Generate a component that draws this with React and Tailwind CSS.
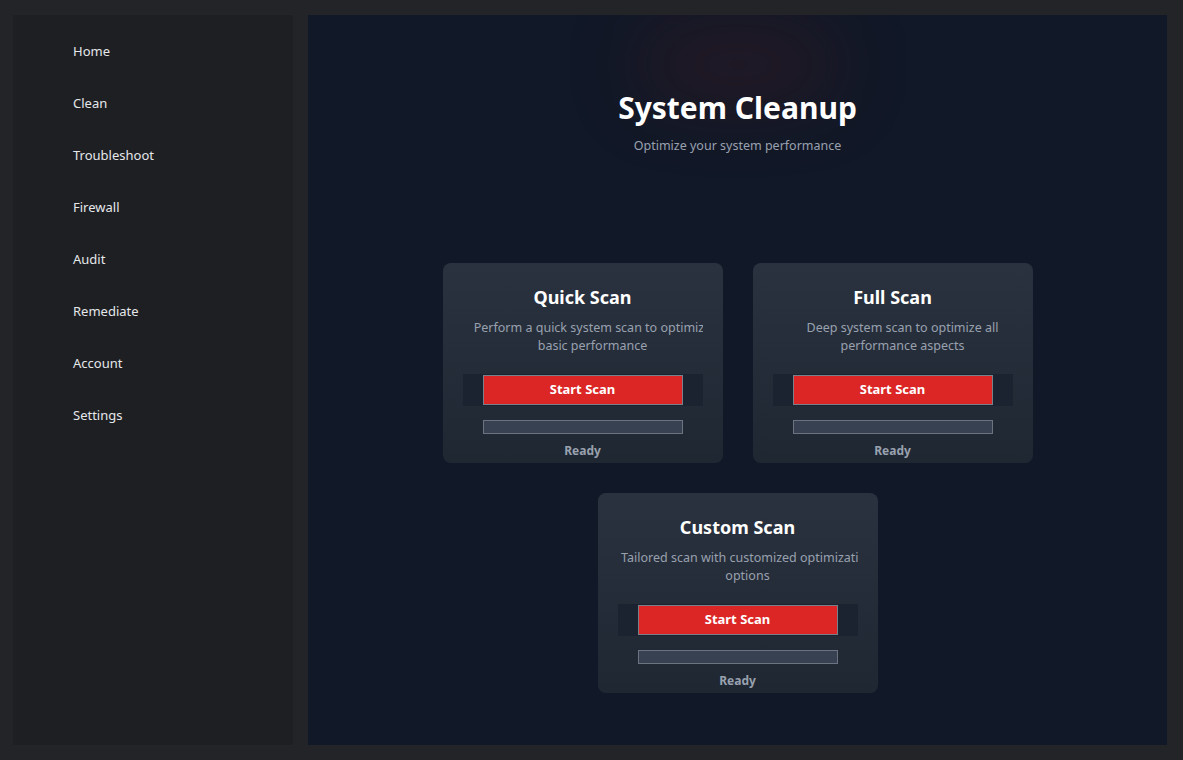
import React from 'react';

const navItems = ['Home', 'Clean', 'Troubleshoot', 'Firewall', 'Audit', 'Remediate', 'Account', 'Settings'];

const scans = [
  { title: 'Quick Scan', lines: ['Perform a quick system scan to optimize', 'basic performance'] },
  { title: 'Full Scan', lines: ['Deep system scan to optimize all', 'performance aspects'] },
  { title: 'Custom Scan', lines: ['Tailored scan with customized optimization', 'options'] },
];

const ScanCard = ({ scan }) => (
  <div className="w-[280px] h-[200px] rounded-lg bg-gradient-to-b from-[#2a323f] to-[#1f2733] flex flex-col items-center pt-[21px]">
    <h2 className="text-[18px] font-bold text-white leading-[26px]">{scan.title}</h2>
    {/* description overflows the box a bit, clipped on the right */}
    <div className="mt-[9px] w-[240px] overflow-hidden">
      <div className="w-[260px] text-center text-[12.5px] leading-[18px] text-gray-400 whitespace-nowrap">
        {scan.lines.map((l) => (
          <div key={l}>{l}</div>
        ))}
      </div>
    </div>
    <div className="mt-[19px] w-[240px] h-[32px] bg-[#1c2330] flex items-center justify-center">
      <button className="w-[200px] h-[30px] bg-[#dc2626] border border-[#7a808a] text-white text-[13px] font-bold">
        Start Scan
      </button>
    </div>
    <div className="mt-[14px] w-[200px] h-[14px] bg-[#374151] border border-[#6b7280]" />
    <div className="mt-[9px] text-[12px] font-bold text-gray-400 leading-[16px]">Ready</div>
  </div>
);

export default function App() {
  return (
    <div
      className="h-screen w-full bg-[#232427] flex gap-[15px] pt-[15px] pb-[15px] pl-[13px] pr-[16px]"
      style={{ fontFamily: '"Noto Sans", "Open Sans", sans-serif' }}
    >
      <aside className="w-[280px] shrink-0 bg-[#1e1f22] pt-[11px]">
        <nav className="flex flex-col">
          {navItems.map((item) => (
            <div key={item} className="h-[52px] flex items-center pl-[60px] text-[13px] text-gray-200">
              {item}
            </div>
          ))}
        </nav>
      </aside>

      <main className="flex-1 bg-[#111827] relative overflow-hidden flex flex-col items-center">
        {/* red glow */}
        <div className="absolute left-[335px] top-[22px] w-[190px] h-[55px] rounded-full bg-[#7f1d1d]/25 blur-2xl" />
        <h1 className="relative mt-[74px] text-[30px] font-bold text-white leading-[38px]">System Cleanup</h1>
        <p className="relative mt-[10px] text-[12.5px] text-gray-400">Optimize your system performance</p>

        <div className="mt-[107px] flex flex-col items-center gap-[30px]">
          <div className="flex gap-[30px]">
            <ScanCard scan={scans[0]} />
            <ScanCard scan={scans[1]} />
          </div>
          <ScanCard scan={scans[2]} />
        </div>
      </main>
    </div>
  );
}
